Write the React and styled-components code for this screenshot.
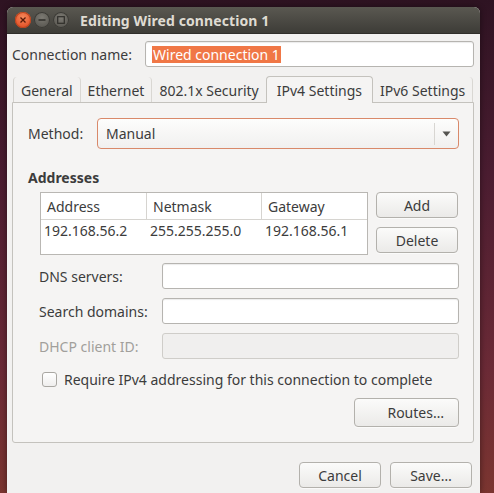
import React from 'react';
import styled, { createGlobalStyle } from 'styled-components';

const GlobalStyle = createGlobalStyle`
  html, body {
    margin: 0;
    padding: 0;
  }
  body {
    width: 494px;
    height: 493px;
    overflow: hidden;
    font-family: "Noto Sans", "DejaVu Sans", sans-serif;
    font-size: 14px;
    color: #3c3c3c;
    background: linear-gradient(180deg, #2e1322 0%, #4a1c30 35%, #6b2a36 75%, #7b3530 100%);
  }
`;

const Desktop = styled.div`
  height: 493px;
  padding: 7px 14px 0 7px;
  box-sizing: border-box;
`;

const Window = styled.div`
  width: 473px;
  height: 486px;
  background: #f2f1f0;
  border-radius: 6px 6px 0 0;
  overflow: hidden;
  box-shadow: 0 0 6px rgba(0, 0, 0, 0.45);
  display: flex;
  flex-direction: column;
`;

const TitleBar = styled.div`
  height: 27px;
  flex: none;
  display: flex;
  align-items: center;
  padding-left: 8px;
  background: linear-gradient(180deg, #5a5851 0%, #3d3c37 100%);
  border-bottom: 1px solid #2f2e2a;
  box-sizing: border-box;
`;

const WinButtons = styled.div`
  display: flex;
  gap: 3px;
  margin-right: 11px;
`;

const WinButton = styled.div`
  width: 16px;
  height: 16px;
  border-radius: 50%;
  display: flex;
  align-items: center;
  justify-content: center;
  background: ${(p) =>
    p.close
      ? 'radial-gradient(circle at 50% 35%, #f58a5d 0%, #e5542a 70%)'
      : 'radial-gradient(circle at 50% 35%, #7c7a73 0%, #5a5852 75%)'};
  box-shadow: inset 0 0 0 1px ${(p) => (p.close ? '#b9451f' : '#3b3a35')};
`;

const Title = styled.div`
  font-weight: bold;
  font-size: 14px;
  color: #dfdbd2;
  letter-spacing: 0.1px;
`;

const Body = styled.div`
  flex: 1;
  padding: 7px 6px 0 5px;
  display: flex;
  flex-direction: column;
`;

const NameRow = styled.div`
  display: flex;
  align-items: center;
`;

const NameLabel = styled.div`
  width: 133px;
  flex: none;
`;

const Entry = styled.div`
  flex: 1;
  height: 26px;
  box-sizing: border-box;
  border: 1px solid ${(p) => (p.disabled ? '#cfcdc9' : '#b6b4b0')};
  border-radius: 3px;
  background: ${(p) => (p.disabled ? '#f0efee' : '#ffffff')};
  box-shadow: ${(p) => (p.disabled ? 'none' : 'inset 0 1px 1px rgba(0,0,0,0.08)')};
  display: flex;
  align-items: center;
  padding-left: 6px;
`;

const Selected = styled.span`
  background: #f07746;
  color: #ffffff;
  padding: 0 1px;
  line-height: 17px;
`;

const Notebook = styled.div`
  margin-top: 8px;
  display: flex;
  flex-direction: column;
`;

const TabStrip = styled.div`
  display: flex;
  align-items: flex-end;
  height: 27px;
  padding-left: 1px;
`;

const Tab = styled.div`
  box-sizing: border-box;
  height: ${(p) => (p.active ? '27px' : '25px')};
  padding: 0 ${(p) => (p.active ? '10px' : '7px')};
  display: flex;
  align-items: center;
  padding-top: ${(p) => (p.active ? '0' : '2px')};
  position: relative;
  z-index: ${(p) => (p.active ? 1 : 0)};
  margin-bottom: ${(p) => (p.active ? '-1px' : '0')};
  background: ${(p) => (p.active ? '#f5f4f3' : 'transparent')};
  border: ${(p) => (p.active ? '1px solid #c4c2bd' : 'none')};
  border-bottom: none;
  border-radius: 4px 4px 0 0;
  border-left: ${(p) => (p.active ? '1px solid #c4c2bd' : p.first ? '1px solid #d4d2ce' : 'none')};
  border-right: ${(p) => (p.active ? '1px solid #c4c2bd' : p.beforeActive ? 'none' : '1px solid #d9d7d3')};
`;

const Panel = styled.div`
  height: 341px;
  box-sizing: border-box;
  border: 1px solid #c4c2bd;
  border-radius: 0 0 3px 3px;
  background: #f5f4f3;
  padding: 15px 14px 0 15px;
  display: flex;
  flex-direction: column;
`;

const MethodRow = styled.div`
  display: flex;
  align-items: center;
`;

const MethodLabel = styled.div`
  width: 69px;
  flex: none;
`;

const Combo = styled.div`
  flex: 1;
  height: 31px;
  box-sizing: border-box;
  border: 1px solid #d9896a;
  border-radius: 4px;
  background: linear-gradient(180deg, #fdfdfc 0%, #f1f0ef 100%);
  display: flex;
  align-items: center;
`;

const ComboText = styled.div`
  flex: 1;
  padding-left: 8px;
`;

const ComboArrow = styled.div`
  width: 23px;
  height: 22px;
  border-left: 1px solid #d8d6d2;
  display: flex;
  align-items: center;
  justify-content: center;
`;

const SectionTitle = styled.div`
  font-weight: bold;
  margin-top: 19px;
`;

const AddressArea = styled.div`
  display: flex;
  gap: 8px;
  padding-left: 12px;
  margin-top: 5px;
`;

const Tree = styled.div`
  width: 328px;
  height: 63px;
  box-sizing: border-box;
  border: 1px solid #b9b7b3;
  background: #ffffff;
`;

const TreeRow = styled.div`
  display: grid;
  grid-template-columns: 106px 115px 1fr;
  height: ${(p) => (p.header ? '27px' : '26px')};
  border-bottom: ${(p) => (p.header ? '1px solid #d6d4d0' : 'none')};
  box-sizing: border-box;
`;

const Cell = styled.div`
  display: flex;
  align-items: center;
  padding-left: ${(p) => (p.header ? '6px' : '3px')};
  padding-bottom: ${(p) => (p.header ? '0' : '6px')};
  border-right: ${(p) => (p.header && !p.last ? '1px solid #d6d4d0' : 'none')};
`;

const SideButtons = styled.div`
  display: flex;
  flex-direction: column;
  gap: 9px;
`;

const Button = styled.div`
  width: ${(p) => p.w || 82}px;
  height: ${(p) => p.h || 26}px;
  box-sizing: border-box;
  border: 1px solid #b3b1ac;
  border-radius: 4px;
  background: linear-gradient(180deg, #fbfbfa 0%, #ebeae8 100%);
  box-shadow: 0 1px 0 rgba(255, 255, 255, 0.6);
  display: flex;
  align-items: center;
  justify-content: ${(p) => (p.right ? 'flex-end' : 'center')};
  padding-right: ${(p) => (p.right ? '14px' : '0')};
`;

const FieldGrid = styled.div`
  display: grid;
  grid-template-columns: 123px 1fr;
  row-gap: 9px;
  padding-left: 11px;
  margin-top: 8px;
  align-items: center;
`;

const FieldLabel = styled.div`
  color: ${(p) => (p.disabled ? '#a19f9b' : '#3c3c3c')};
`;

const CheckRow = styled.div`
  display: flex;
  align-items: center;
  gap: 7px;
  margin-top: 11px;
  padding-left: 14px;
`;

const CheckBox = styled.div`
  width: 15px;
  height: 15px;
  box-sizing: border-box;
  border: 1px solid #a9a7a2;
  border-radius: 3px;
  background: linear-gradient(180deg, #ffffff 0%, #efeeed 100%);
`;

const RoutesRow = styled.div`
  display: flex;
  justify-content: flex-end;
  margin-top: 9px;
`;

const DialogButtons = styled.div`
  display: flex;
  justify-content: flex-end;
  gap: 9px;
  margin-top: 19px;
  padding-right: 2px;
`;

const App = () => {
  return (
    <>
      <GlobalStyle />
      <Desktop>
        <Window>
          <TitleBar>
            <WinButtons>
              <WinButton close>
                <svg width="8" height="8" viewBox="0 0 8 8">
                  <path d="M1.5 1.5 L6.5 6.5 M6.5 1.5 L1.5 6.5" stroke="#5a1a08" strokeWidth="1.3" />
                </svg>
              </WinButton>
              <WinButton>
                <svg width="8" height="8" viewBox="0 0 8 8">
                  <path d="M0.5 4 H7.5" stroke="#2f2e2a" strokeWidth="1.3" />
                </svg>
              </WinButton>
              <WinButton>
                <svg width="8" height="8" viewBox="0 0 8 8">
                  <rect x="0.7" y="0.7" width="6.6" height="6.6" fill="none" stroke="#2f2e2a" strokeWidth="1.2" />
                </svg>
              </WinButton>
            </WinButtons>
            <Title>Editing Wired connection 1</Title>
          </TitleBar>
          <Body>
            <NameRow>
              <NameLabel>Connection name:</NameLabel>
              <Entry>
                <Selected>Wired connection 1</Selected>
              </Entry>
            </NameRow>
            <Notebook>
              <TabStrip>
                <Tab first>General</Tab>
                <Tab>Ethernet</Tab>
                <Tab beforeActive>802.1x Security</Tab>
                <Tab active>IPv4 Settings</Tab>
                <Tab>IPv6 Settings</Tab>
              </TabStrip>
              <Panel>
                <MethodRow>
                  <MethodLabel>Method:</MethodLabel>
                  <Combo>
                    <ComboText>Manual</ComboText>
                    <ComboArrow>
                      <svg width="9" height="6" viewBox="0 0 9 6">
                        <path d="M0.5 0.5 H8.5 L4.5 5.5 Z" fill="#555450" />
                      </svg>
                    </ComboArrow>
                  </Combo>
                </MethodRow>
                <SectionTitle>Addresses</SectionTitle>
                <AddressArea>
                  <Tree>
                    <TreeRow header>
                      <Cell header>Address</Cell>
                      <Cell header>Netmask</Cell>
                      <Cell header last>Gateway</Cell>
                    </TreeRow>
                    <TreeRow>
                      <Cell>192.168.56.2</Cell>
                      <Cell>255.255.255.0</Cell>
                      <Cell>192.168.56.1</Cell>
                    </TreeRow>
                  </Tree>
                  <SideButtons>
                    <Button>Add</Button>
                    <Button>Delete</Button>
                  </SideButtons>
                </AddressArea>
                <FieldGrid>
                  <FieldLabel>DNS servers:</FieldLabel>
                  <Entry />
                  <FieldLabel>Search domains:</FieldLabel>
                  <Entry />
                  <FieldLabel disabled>DHCP client ID:</FieldLabel>
                  <Entry disabled />
                </FieldGrid>
                <CheckRow>
                  <CheckBox />
                  <span>Require IPv4 addressing for this connection to complete</span>
                </CheckRow>
                <RoutesRow>
                  <Button w={105} h={29} right>Routes…</Button>
                </RoutesRow>
              </Panel>
            </Notebook>
            <DialogButtons>
              <Button>Cancel</Button>
              <Button>Save…</Button>
            </DialogButtons>
          </Body>
        </Window>
      </Desktop>
    </>
  );
};

export default App;
